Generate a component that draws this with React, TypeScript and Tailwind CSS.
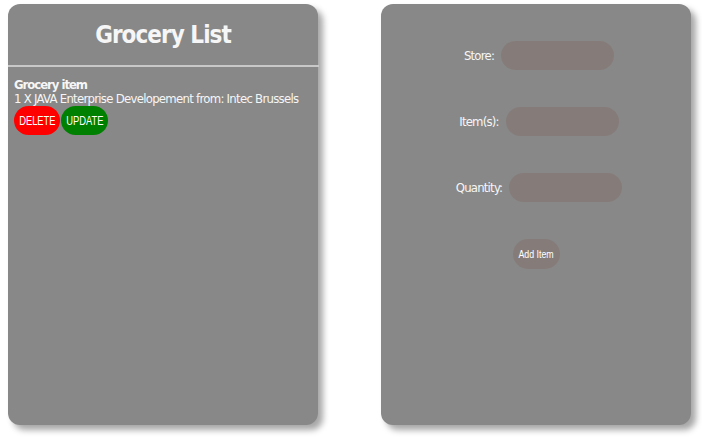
import React from "react";

export default function App() {
  const body = { fontFamily: '"DejaVu Sans Condensed", "DejaVu Sans", sans-serif' };
  const arial = { fontFamily: '"Liberation Sans", sans-serif' };
  return (
    <div className="w-[702px] h-[438px] bg-white flex items-start pt-[4px] pl-[8px] gap-[63px] text-[#f6f6f6]" style={body}>
      <div className="w-[310px] h-[421px] bg-[#888888] rounded-[12px] shadow-[5px_5px_6px_rgba(0,0,0,0.35)] flex flex-col">
        <div className="h-[61px] flex items-center justify-center">
          <h1 className="text-[24px] font-bold leading-none tracking-[-0.04em]">Grocery List</h1>
        </div>
        <div className="h-[2px] bg-[#c8c8c8] w-[311px]" />
        <div className="px-[6px] pt-[11px]">
          <div className="text-[13px] font-bold leading-[14px] tracking-[-0.08em]">Grocery item</div>
          <div className="text-[13px] leading-[14px] whitespace-nowrap tracking-[-0.055em]">1 X JAVA Enterprise Developement from: Intec Brussels</div>
          <div className="flex gap-[1px]">
            <button className="w-[46px] h-[29px] rounded-full bg-[#ff0000] text-white text-[12px] flex items-center justify-center" style={arial}>
              <span className="inline-block scale-x-[0.78]">DELETE</span>
            </button>
            <button className="w-[47px] h-[29px] rounded-full bg-[#008000] text-white text-[12px] flex items-center justify-center" style={arial}>
              <span className="inline-block scale-x-[0.78]">UPDATE</span>
            </button>
          </div>
        </div>
      </div>
      <div className="w-[310px] h-[421px] bg-[#888888] rounded-[12px] shadow-[5px_5px_6px_rgba(0,0,0,0.35)] flex flex-col items-center pt-[37px] gap-[37px]">
        <div className="flex items-center gap-[7px] pl-[6px]">
          <label className="text-[13px] tracking-[-0.06em]">Store:</label>
          <div className="w-[113px] h-[29px] rounded-full bg-[#857c7a]" />
        </div>
        <div className="flex items-center gap-[7px] pl-[6px]">
          <label className="text-[13px] tracking-[-0.06em]">Item(s):</label>
          <div className="w-[113px] h-[29px] rounded-full bg-[#857c7a]" />
        </div>
        <div className="flex items-center gap-[7px] pl-[6px]">
          <label className="text-[13px] tracking-[-0.06em]">Quantity:</label>
          <div className="w-[113px] h-[29px] rounded-full bg-[#857c7a]" />
        </div>
        <button className="w-[47px] h-[30px] rounded-full bg-[#857c7a] text-white text-[11px] flex items-center justify-center" style={arial}>
          <span className="inline-block scale-x-[0.8] whitespace-nowrap">Add Item</span>
        </button>
      </div>
    </div>
  );
}
